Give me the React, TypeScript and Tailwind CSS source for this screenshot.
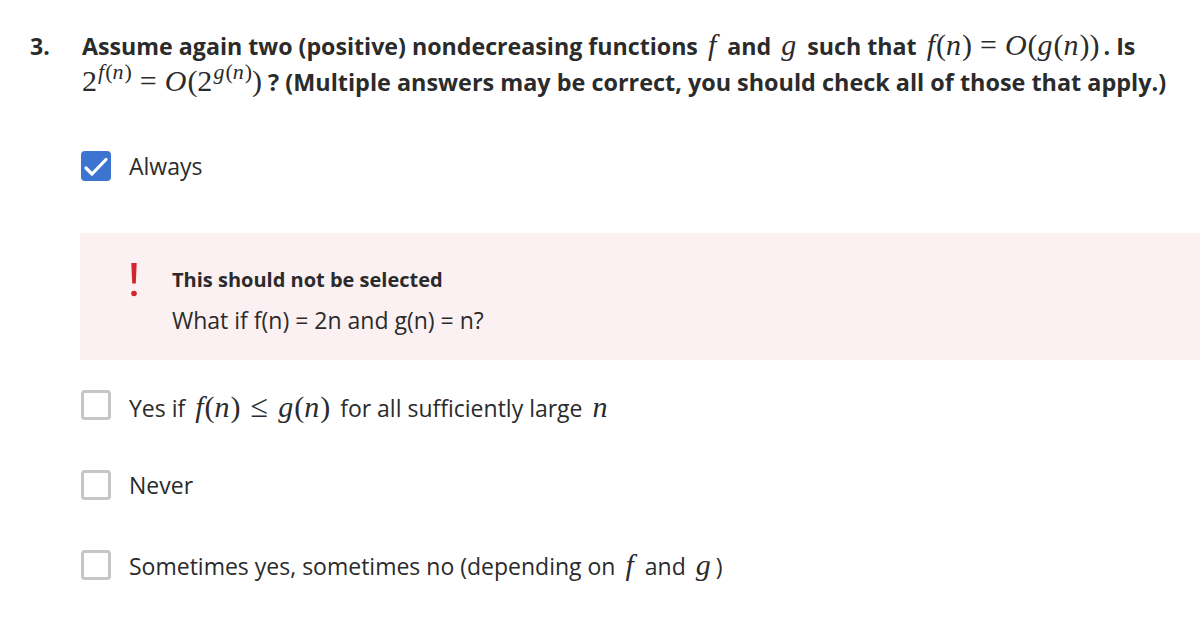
import React from "react";

const M = ({ children }: { children: React.ReactNode }) => (
  <span className="font-['Liberation_Serif',serif] font-normal text-[30px] leading-none mx-[4px]">{children}</span>
);
const I = ({ children }: { children: React.ReactNode }) => <span className="italic pr-[1px]">{children}</span>;
const Eq = ({ children, wide }: { children: React.ReactNode; wide?: boolean }) => (
  <span className={wide ? "mx-[10px] text-[32px]" : "mx-[8px]"}>{children}</span>
);
const Sup = ({ children }: { children: React.ReactNode }) => (
  <span className="relative -top-[12px] text-[22px] leading-none ml-[1px]">{children}</span>
);

const Box = ({ checked }: { checked?: boolean }) =>
  checked ? (
    <div className="w-[30px] h-[30px] rounded-[4px] bg-[#3d74d0] flex items-center justify-center shrink-0">
      <svg width="30" height="30" viewBox="0 0 30 30" fill="none">
        <path d="M5 17 L11 23 L25 8.5" stroke="white" strokeWidth="3.2" strokeLinecap="round" strokeLinejoin="round" />
      </svg>
    </div>
  ) : (
    <div className="w-[30px] h-[30px] rounded-[4px] border-[3px] border-[#c6c6c6] bg-white shrink-0" />
  );

const Row = ({ checked, children, className }: { checked?: boolean; children: React.ReactNode; className?: string }) => (
  <div className={"flex items-center gap-[18px] h-[30px] ml-[1px] " + (className ?? "")}>
    <Box checked={checked} />
    <div className="text-[23px] leading-[30px] h-[30px] whitespace-nowrap">{children}</div>
  </div>
);

export default function App() {
  return (
    <div className="w-[1200px] h-[622px] bg-white text-[#2b2b2b] font-['Open_Sans',sans-serif] overflow-hidden">
      <div className="flex pt-[28px] pl-[30px]">
        <div className="w-[52px] text-[23px] font-bold leading-[36px]">3.</div>
        <div className="text-[23.2px] font-bold leading-[36px] whitespace-nowrap">
          <div className="h-[36px]">
            Assume again two (positive) nondecreasing functions <M><I>f</I></M> and <M><I>g</I></M> such that{" "}
            <M>
              <I>f</I>(<I>n</I>)<Eq>=</Eq><I>O</I>(<I>g</I>(<I>n</I>))
            </M>
            . Is
          </div>
          <div className="h-[36px]">
            <span className="font-['Liberation_Serif',serif] font-normal text-[30px] leading-none">
              2<Sup><I>f</I>(<I>n</I>)</Sup><Eq>=</Eq><I>O</I>(2<Sup><I>g</I>(<I>n</I>)</Sup>)
            </span>{" "}
            <span className="text-[23.4px]">? (Multiple answers may be correct, you should check all of those that apply.)</span>
          </div>
        </div>
      </div>

      <div className="pl-[80px]">
        <Row checked className="mt-[51px]">Always</Row>

        <div className="mt-[52px] h-[127px] bg-[#fcf1f2] flex pt-[32px] pl-[51px]">
          <div className="w-[41px] shrink-0">
            <svg width="6" height="34" viewBox="0 0 6 34" className="mt-[-2px]">
              <path d="M0.3 0 H5.7 L4.8 20.5 H1.2 Z" fill="#d2262c" />
              <circle cx="3" cy="30.5" r="2.8" fill="#d2262c" />
            </svg>
          </div>
          <div>
            <div className="text-[20px] font-bold leading-[30px] h-[30px]">This should not be selected</div>
            <div className="text-[23px] leading-[30px] h-[30px] mt-[10px]">What if f(n) = 2n and g(n) = n?</div>
          </div>
        </div>

        <Row className="mt-[30px]">
          Yes if{" "}
          <M>
            <I>f</I>(<I>n</I>)<Eq wide>≤</Eq><I>g</I>(<I>n</I>)
          </M>{" "}
          for all sufficiently large <M><I>n</I></M>
        </Row>
        <Row className="mt-[50px]">Never</Row>
        <Row className="mt-[50px]">
          Sometimes yes, sometimes no (depending on <M><I>f</I></M> and <M><I>g</I></M>)
        </Row>
      </div>
    </div>
  );
}
